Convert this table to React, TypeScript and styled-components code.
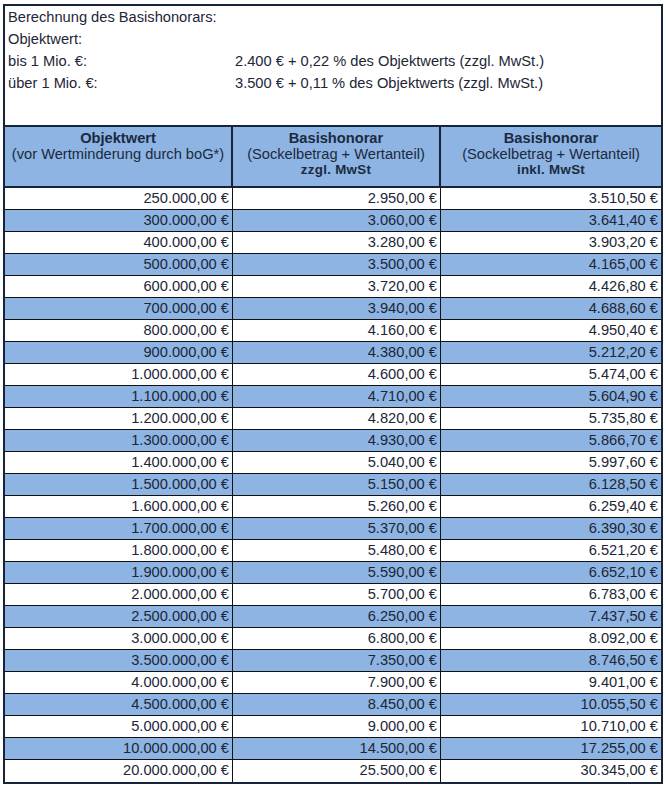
import React from "react";
import styled, { createGlobalStyle } from "styled-components";

const GlobalStyle = createGlobalStyle`
  html, body { margin: 0; padding: 0; background: #ffffff; }
  body { font-family: "Liberation Sans", Arial, sans-serif; }
  * { box-sizing: border-box; }
`;

const NAVY = "#15243a";
const BLUE = "#8db4e2";
const TEXT = "#1d2636";

const Sheet = styled.div`
  margin: 4px 0 0 3px;
  width: 660px;
  border: 2px solid ${NAVY};
  font-family: "Liberation Sans", Arial, sans-serif;
  font-size: 14.67px;
  color: ${TEXT};
`;

const Intro = styled.div`
  height: 121px;
  border-bottom: 2px solid ${NAVY};
  display: flex;
  flex-direction: column;
`;

const IntroRow = styled.div`
  display: grid;
  grid-template-columns: 227px 1fr;
  height: 22px;
  line-height: 22px;
`;

const IntroCell = styled.div`
  padding-left: 3px;
  white-space: nowrap;
`;

const Columns = `grid-template-columns: 228px 208px 1fr;`;

const HeaderRow = styled.div`
  display: grid;
  ${Columns}
  height: 61px;
  background: ${BLUE};
  border-bottom: 2px solid ${NAVY};
`;

const HeaderCell = styled.div<{ $last?: boolean }>`
  display: flex;
  flex-direction: column;
  align-items: center;
  padding-top: 3px;
  border-right: ${(p) => (p.$last ? "none" : `2px solid ${NAVY}`)};
  color: #1b2a40;
  line-height: 16px;
  white-space: nowrap;
`;

const HeadTitle = styled.div`
  font-weight: bold;
  font-size: 14.67px;
`;

const HeadSub = styled.div`
  font-size: 14.67px;
`;

const HeadTax = styled.div`
  font-weight: bold;
  font-size: 13.33px;
  letter-spacing: 0.3px;
`;

const DataRow = styled.div<{ $alt: boolean; $last: boolean }>`
  display: grid;
  ${Columns}
  height: 22px;
  background: ${(p) => (p.$alt ? BLUE : "#ffffff")};
  border-bottom: ${(p) => (p.$last ? "none" : "1px solid #111111")};
`;

const DataCell = styled.div<{ $last?: boolean }>`
  text-align: right;
  padding-right: 3px;
  line-height: 21px;
  border-right: ${(p) => (p.$last ? "none" : "1px solid #111111")};
  white-space: nowrap;
`;

const rows: [string, string, string][] = [
  ["250.000,00 €", "2.950,00 €", "3.510,50 €"],
  ["300.000,00 €", "3.060,00 €", "3.641,40 €"],
  ["400.000,00 €", "3.280,00 €", "3.903,20 €"],
  ["500.000,00 €", "3.500,00 €", "4.165,00 €"],
  ["600.000,00 €", "3.720,00 €", "4.426,80 €"],
  ["700.000,00 €", "3.940,00 €", "4.688,60 €"],
  ["800.000,00 €", "4.160,00 €", "4.950,40 €"],
  ["900.000,00 €", "4.380,00 €", "5.212,20 €"],
  ["1.000.000,00 €", "4.600,00 €", "5.474,00 €"],
  ["1.100.000,00 €", "4.710,00 €", "5.604,90 €"],
  ["1.200.000,00 €", "4.820,00 €", "5.735,80 €"],
  ["1.300.000,00 €", "4.930,00 €", "5.866,70 €"],
  ["1.400.000,00 €", "5.040,00 €", "5.997,60 €"],
  ["1.500.000,00 €", "5.150,00 €", "6.128,50 €"],
  ["1.600.000,00 €", "5.260,00 €", "6.259,40 €"],
  ["1.700.000,00 €", "5.370,00 €", "6.390,30 €"],
  ["1.800.000,00 €", "5.480,00 €", "6.521,20 €"],
  ["1.900.000,00 €", "5.590,00 €", "6.652,10 €"],
  ["2.000.000,00 €", "5.700,00 €", "6.783,00 €"],
  ["2.500.000,00 €", "6.250,00 €", "7.437,50 €"],
  ["3.000.000,00 €", "6.800,00 €", "8.092,00 €"],
  ["3.500.000,00 €", "7.350,00 €", "8.746,50 €"],
  ["4.000.000,00 €", "7.900,00 €", "9.401,00 €"],
  ["4.500.000,00 €", "8.450,00 €", "10.055,50 €"],
  ["5.000.000,00 €", "9.000,00 €", "10.710,00 €"],
  ["10.000.000,00 €", "14.500,00 €", "17.255,00 €"],
  ["20.000.000,00 €", "25.500,00 €", "30.345,00 €"],
];

export default function App() {
  return (
    <>
      <GlobalStyle />
      <Sheet>
        <Intro>
          <IntroRow>
            <IntroCell>Berechnung des Basishonorars:</IntroCell>
            <IntroCell />
          </IntroRow>
          <IntroRow>
            <IntroCell>Objektwert:</IntroCell>
            <IntroCell />
          </IntroRow>
          <IntroRow>
            <IntroCell>bis 1 Mio. €:</IntroCell>
            <IntroCell>2.400 € + 0,22 % des Objektwerts (zzgl. MwSt.)</IntroCell>
          </IntroRow>
          <IntroRow>
            <IntroCell>über 1 Mio. €:</IntroCell>
            <IntroCell>3.500 € + 0,11 % des Objektwerts (zzgl. MwSt.)</IntroCell>
          </IntroRow>
        </Intro>
        <HeaderRow>
          <HeaderCell>
            <HeadTitle>Objektwert</HeadTitle>
            <HeadSub>(vor Wertminderung durch boG*)</HeadSub>
          </HeaderCell>
          <HeaderCell>
            <HeadTitle>Basishonorar</HeadTitle>
            <HeadSub>(Sockelbetrag + Wertanteil)</HeadSub>
            <HeadTax>zzgl. MwSt</HeadTax>
          </HeaderCell>
          <HeaderCell $last>
            <HeadTitle>Basishonorar</HeadTitle>
            <HeadSub>(Sockelbetrag + Wertanteil)</HeadSub>
            <HeadTax>inkl. MwSt</HeadTax>
          </HeaderCell>
        </HeaderRow>
        {rows.map((r, i) => (
          <DataRow key={r[0]} $alt={i % 2 === 1} $last={i === rows.length - 1}>
            <DataCell>{r[0]}</DataCell>
            <DataCell>{r[1]}</DataCell>
            <DataCell $last>{r[2]}</DataCell>
          </DataRow>
        ))}
      </Sheet>
    </>
  );
}
